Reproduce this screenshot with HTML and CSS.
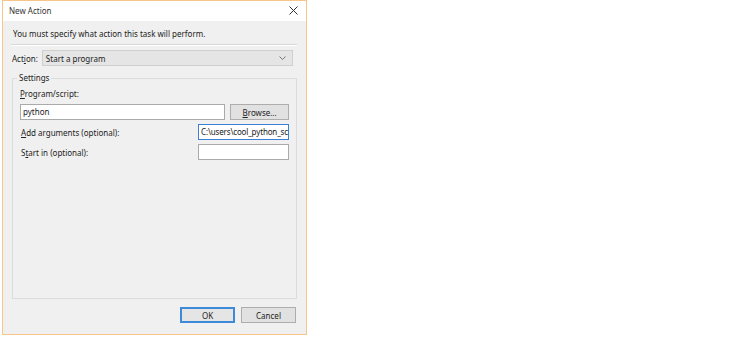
FILE: index.html
```html
<!DOCTYPE html>
<html lang="en">
<head>
  <meta charset="UTF-8">
  <title>New Action</title>
  <link rel="stylesheet" href="styles.css">
</head>
<body>
  <div class="dialog">
    <div class="titlebar">
      <span class="title">New Action</span>
      <span class="close">
        <svg width="9" height="9" viewBox="0 0 9 9"><path d="M0.5 0.5L8.5 8.5M8.5 0.5L0.5 8.5" stroke="#333" stroke-width="1"/></svg>
      </span>
    </div>

    <div class="content">
      <p class="intro">You must specify what action this task will perform.</p>
      <div class="separator"></div>

      <div class="action-row">
        <label>Act<u>i</u>on:</label>
        <div class="combo">
          <span>Start a program</span>
          <svg width="7" height="4" viewBox="0 0 7 4"><path d="M0.5 0.5L3.5 3.5L6.5 0.5" stroke="#777" fill="none"/></svg>
        </div>
      </div>

      <div class="groupbox">
        <span class="legend">Settings</span>
        <label class="field-label"><u>P</u>rogram/script:</label>
        <div class="program-row">
          <div class="textbox wide">python</div>
          <div class="btn browse"><u>B</u>rowse...</div>
        </div>
        <div class="opt-row">
          <label><u>A</u>dd arguments (optional):</label>
          <div class="textbox small focused">C:\users\cool_python_sc</div>
        </div>
        <div class="opt-row">
          <label>S<u>t</u>art in (optional):</label>
          <div class="textbox small"></div>
        </div>
      </div>

      <div class="buttons">
        <div class="btn default">OK</div>
        <div class="btn">Cancel</div>
      </div>
    </div>
  </div>
</body>
</html>
```

FILE: styles.css
```css
* {
  box-sizing: border-box;
}

body {
  margin: 0;
  background: #fff;
  font-family: "Noto Sans", "Open Sans", sans-serif;
  font-size: 8px;
  color: #222;
}

.dialog {
  width: 305px;
  height: 335px;
  margin-left: 2px;
  border: 1px solid #f5c58a;
  background: #f0f0f0;
  display: flex;
  flex-direction: column;
}

.titlebar {
  height: 20px;
  background: #fff;
  display: flex;
  align-items: center;
  justify-content: space-between;
  padding: 0 8px 1px 6px;
}

.title {
  color: #333;
}

.close {
  display: flex;
  align-items: center;
}

.content {
  flex: 1;
  padding: 7px 9px 0 8px;
  display: flex;
  flex-direction: column;
}

.intro {
  margin: 0 0 0 2px;
  height: 16px;
  line-height: 12px;
}

.separator {
  background: #d8d8d8;
  border-bottom: 1px solid #fff;
  height: 2px;
  margin-bottom: 4px;
}

.action-row {
  display: flex;
  align-items: center;
  gap: 4px;
  padding-left: 1px;
}

.combo {
  flex: 1;
  height: 16px;
  margin-right: 4px;
  background: #e5e5e5;
  border: 1px solid #cfcfcf;
  display: flex;
  align-items: center;
  justify-content: space-between;
  padding: 0 6px 0 3px;
}

.groupbox {
  position: relative;
  margin-top: 12px;
  margin-left: 1px;
  height: 221px;
  border: 1px solid #dcdcdc;
  padding: 9px 7px 0 7px;
}

.legend {
  position: absolute;
  top: -7px;
  left: 4px;
  background: #f0f0f0;
  padding: 0 2px;
}

.field-label {
  display: block;
  margin-bottom: 5px;
}

.program-row {
  display: flex;
  gap: 5px;
  margin-bottom: 4px;
}

.textbox {
  height: 16px;
  background: #fff;
  border: 1px solid #aaa;
  padding: 0 2px;
  line-height: 14px;
  white-space: nowrap;
  overflow: hidden;
}

.textbox.wide {
  width: 206px;
}

.textbox.small {
  width: 91px;
  letter-spacing: -0.15px;
}

.textbox.focused {
  border-color: #3c7fd6;
}

.opt-row {
  display: flex;
  justify-content: space-between;
  align-items: center;
  padding-left: 1px;
  padding-right: 0;
  margin-bottom: 4px;
}

.btn {
  width: 60px;
  height: 16px;
  background: #e1e1e1;
  border: 1px solid #adadad;
  display: flex;
  align-items: center;
  justify-content: center;
}

.btn.browse {
  width: 59px;
}

.buttons {
  display: flex;
  justify-content: flex-end;
  gap: 6px;
  margin-top: 8px;
  padding-right: 1px;
}

.btn.default {
  border: 2px solid #3c8ad8;
  background: #e5e5e5;
}

.buttons .btn {
  width: 55px;
}
```
